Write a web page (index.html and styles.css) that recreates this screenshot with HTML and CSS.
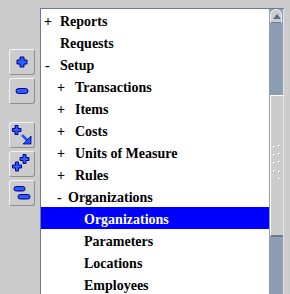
FILE: index.html
```html
<!DOCTYPE html>
<html lang="en">
<head>
    <meta charset="UTF-8">
    <meta name="viewport" content="width=device-width, initial-scale=1.0">
    <title>Setup Navigator</title>
    <link rel="stylesheet" href="styles.css">
</head>
<body>

    <div class="app">

        <!-- TOOLBAR -->
        <div class="toolbar">
            <div class="group">
                <button class="tool" title="Expand">
                    <svg width="12" height="12" viewBox="0 0 12 12">
                        <polygon points="4,1 8,1 8,4 11,4 11,8 8,8 8,11 4,11 4,8 1,8 1,4 4,4" fill="#2c5cff" stroke="#00008b" stroke-width="1"/>
                    </svg>
                </button>
                <button class="tool" title="Collapse">
                    <svg width="14" height="8" viewBox="0 0 14 8">
                        <rect x="1" y="1.5" width="12" height="5" rx="2.5" fill="#2c5cff" stroke="#00008b" stroke-width="1"/>
                    </svg>
                </button>
            </div>
            <div class="group">
                <button class="tool" title="Expand Branch">
                    <svg width="20" height="20" viewBox="0 0 20 20">
                        <polygon points="3,0.5 6,0.5 6,3.5 9,3.5 9,6.5 6,6.5 6,9.5 3,9.5 3,6.5 0.5,6.5 0.5,3.5 3,3.5" fill="#2c5cff" stroke="#00008b" stroke-width="1"/>
                        <line x1="10" y1="10" x2="16" y2="16" stroke="#1f4fff" stroke-width="2.5"/>
                        <polygon points="19,11 19,19 11,19" fill="#1f4fff" stroke="#00008b" stroke-width="0.8"/>
                    </svg>
                </button>
                <button class="tool" title="Expand All">
                    <svg width="20" height="20" viewBox="0 0 20 20">
                        <polygon points="11,0.5 14,0.5 14,3.5 17,3.5 17,6.5 14,6.5 14,9.5 11,9.5 11,6.5 8,6.5 8,3.5 11,3.5" fill="#2c5cff" stroke="#00008b" stroke-width="1"/>
                        <polygon points="3.5,8 6.5,8 6.5,11 9.5,11 9.5,14 6.5,14 6.5,17 3.5,17 3.5,14 0.5,14 0.5,11 3.5,11" fill="#2c5cff" stroke="#00008b" stroke-width="1"/>
                    </svg>
                </button>
                <button class="tool" title="Collapse All">
                    <svg width="18" height="16" viewBox="0 0 18 16">
                        <rect x="1" y="1.5" width="11" height="4.5" rx="2.2" fill="#2c5cff" stroke="#00008b" stroke-width="1"/>
                        <rect x="5" y="9.5" width="12" height="4.5" rx="2.2" fill="#2c5cff" stroke="#00008b" stroke-width="1"/>
                    </svg>
                </button>
            </div>
        </div>

        <!-- TREE -->
        <div class="tree">
            <ul class="rows">
                <li class="row lvl0"><span class="sign plus">+</span>Reports</li>
                <li class="row lvl0 leaf">Requests</li>
                <li class="row lvl0"><span class="sign minus">-</span>Setup</li>
                <li class="row lvl1"><span class="sign plus">+</span>Transactions</li>
                <li class="row lvl1"><span class="sign plus">+</span>Items</li>
                <li class="row lvl1"><span class="sign plus">+</span>Costs</li>
                <li class="row lvl1"><span class="sign plus">+</span>Units of Measure</li>
                <li class="row lvl1"><span class="sign plus">+</span>Rules</li>
                <li class="row lvl1"><span class="sign minus">-</span>Organizations</li>
                <li class="row lvl2 selected">Organizations</li>
                <li class="row lvl2">Parameters</li>
                <li class="row lvl2">Locations</li>
                <li class="row lvl2">Employees</li>
            </ul>

            <div class="scrollbar">
                <div class="arrow-up"></div>
                <div class="track-top"></div>
                <div class="thumb">
                    <svg class="grip" width="10" height="38" viewBox="0 0 10 38">
                        <rect x="1" y="1" width="2" height="2" fill="#fff"/>
                        <rect x="6" y="0" width="2" height="2" fill="#fff"/>
                        <rect x="1" y="9" width="2" height="2" fill="#fff"/>
                        <rect x="6" y="8" width="2" height="2" fill="#fff"/>
                        <rect x="1" y="17" width="2" height="2" fill="#fff"/>
                        <rect x="6" y="16" width="2" height="2" fill="#fff"/>
                        <rect x="1" y="25" width="2" height="2" fill="#fff"/>
                        <rect x="6" y="26" width="2" height="2" fill="#fff"/>
                        <rect x="6" y="33" width="2" height="2" fill="#fff"/>
                        <rect x="2" y="2" width="1" height="1" fill="#8a96a8"/>
                        <rect x="7" y="1" width="1" height="1" fill="#8a96a8"/>
                        <rect x="2" y="10" width="1" height="1" fill="#8a96a8"/>
                        <rect x="7" y="9" width="1" height="1" fill="#8a96a8"/>
                        <rect x="2" y="18" width="1" height="1" fill="#8a96a8"/>
                        <rect x="7" y="17" width="1" height="1" fill="#8a96a8"/>
                        <rect x="2" y="26" width="1" height="1" fill="#8a96a8"/>
                        <rect x="7" y="27" width="1" height="1" fill="#8a96a8"/>
                        <rect x="7" y="34" width="1" height="1" fill="#8a96a8"/>
                    </svg>
                </div>
                <div class="track-bottom"></div>
            </div>
        </div>

    </div>

</body>
</html>
```

FILE: styles.css
```css
* {
    margin: 0;
    padding: 0;
    box-sizing: border-box;
}

body {
    background: #cccccc;
    font-family: "Liberation Serif", "Times New Roman", serif;
    overflow: hidden;
}

.app {
    display: flex;
    height: 294px;
}

/* TOOLBAR */
.toolbar {
    width: 40px;
    padding: 49px 0 0 9px;
    display: flex;
    flex-direction: column;
    gap: 18px;
}

.group {
    display: flex;
    flex-direction: column;
    gap: 3px;
}

.tool {
    width: 26px;
    height: 26px;
    display: flex;
    justify-content: center;
    align-items: center;
    background: #cccccc;
    border: 1px solid;
    border-color: #f2f2f2 #8e8e8e #8e8e8e #f2f2f2;
    border-radius: 3px;
    cursor: pointer;
}

/* TREE */
.tree {
    margin-top: 8px;
    width: 244px;
    height: 286px;
    display: flex;
    background: #ffffff;
    border-top: 1px solid #6b7b96;
    border-left: 1px solid #6b7b96;
    overflow: hidden;
}

.rows {
    list-style: none;
    flex: 1;
}

.row {
    height: 22px;
    line-height: 19px;
    padding-top: 3px;
    font-size: 14px;
    font-weight: bold;
    color: #000000;
    white-space: nowrap;
}

.lvl0 { padding-left: 3px; }
.lvl0.leaf { padding-left: 19px; }
.lvl1 { padding-left: 16px; }
.lvl2 { padding-left: 43px; }

.sign { display: inline-block; }
.lvl0 .plus { width: 16px; }
.lvl0 .minus { width: 15px; margin-left: 1px; }
.lvl1 .plus { width: 18px; }
.lvl1 .minus { width: 11px; }

.row.selected {
    background: #0000ff;
    color: #ffffff;
}

/* SCROLLBAR */
.scrollbar {
    width: 15px;
    display: flex;
    flex-direction: column;
    background: #8d9db4;
    border-right: 1px solid #e6e6e6;
}

.arrow-up {
    height: 14px;
    margin: 0 1px 0 1px;
    background: #cccccc;
    border: 1px solid #f0f0f0;
    border-bottom: 1px solid #6b7b96;
    border-radius: 6px 6px 0 0;
    position: relative;
}

.arrow-up::after {
    content: "";
    position: absolute;
    left: 2px;
    top: 4px;
    border-left: 4px solid transparent;
    border-right: 4px solid transparent;
    border-bottom: 5px solid #5b6b8a;
}

.track-top { height: 72px; }

.thumb {
    height: 142px;
    margin-left: 1px;
    display: flex;
    justify-content: center;
    align-items: flex-start;
    padding-top: 49px;
    background: #cccccc;
    border-top: 1px solid #ffffff;
    border-left: 1px solid #ffffff;
    border-bottom: 2px solid #6b7b96;
}

.track-bottom { flex: 1; }
```
